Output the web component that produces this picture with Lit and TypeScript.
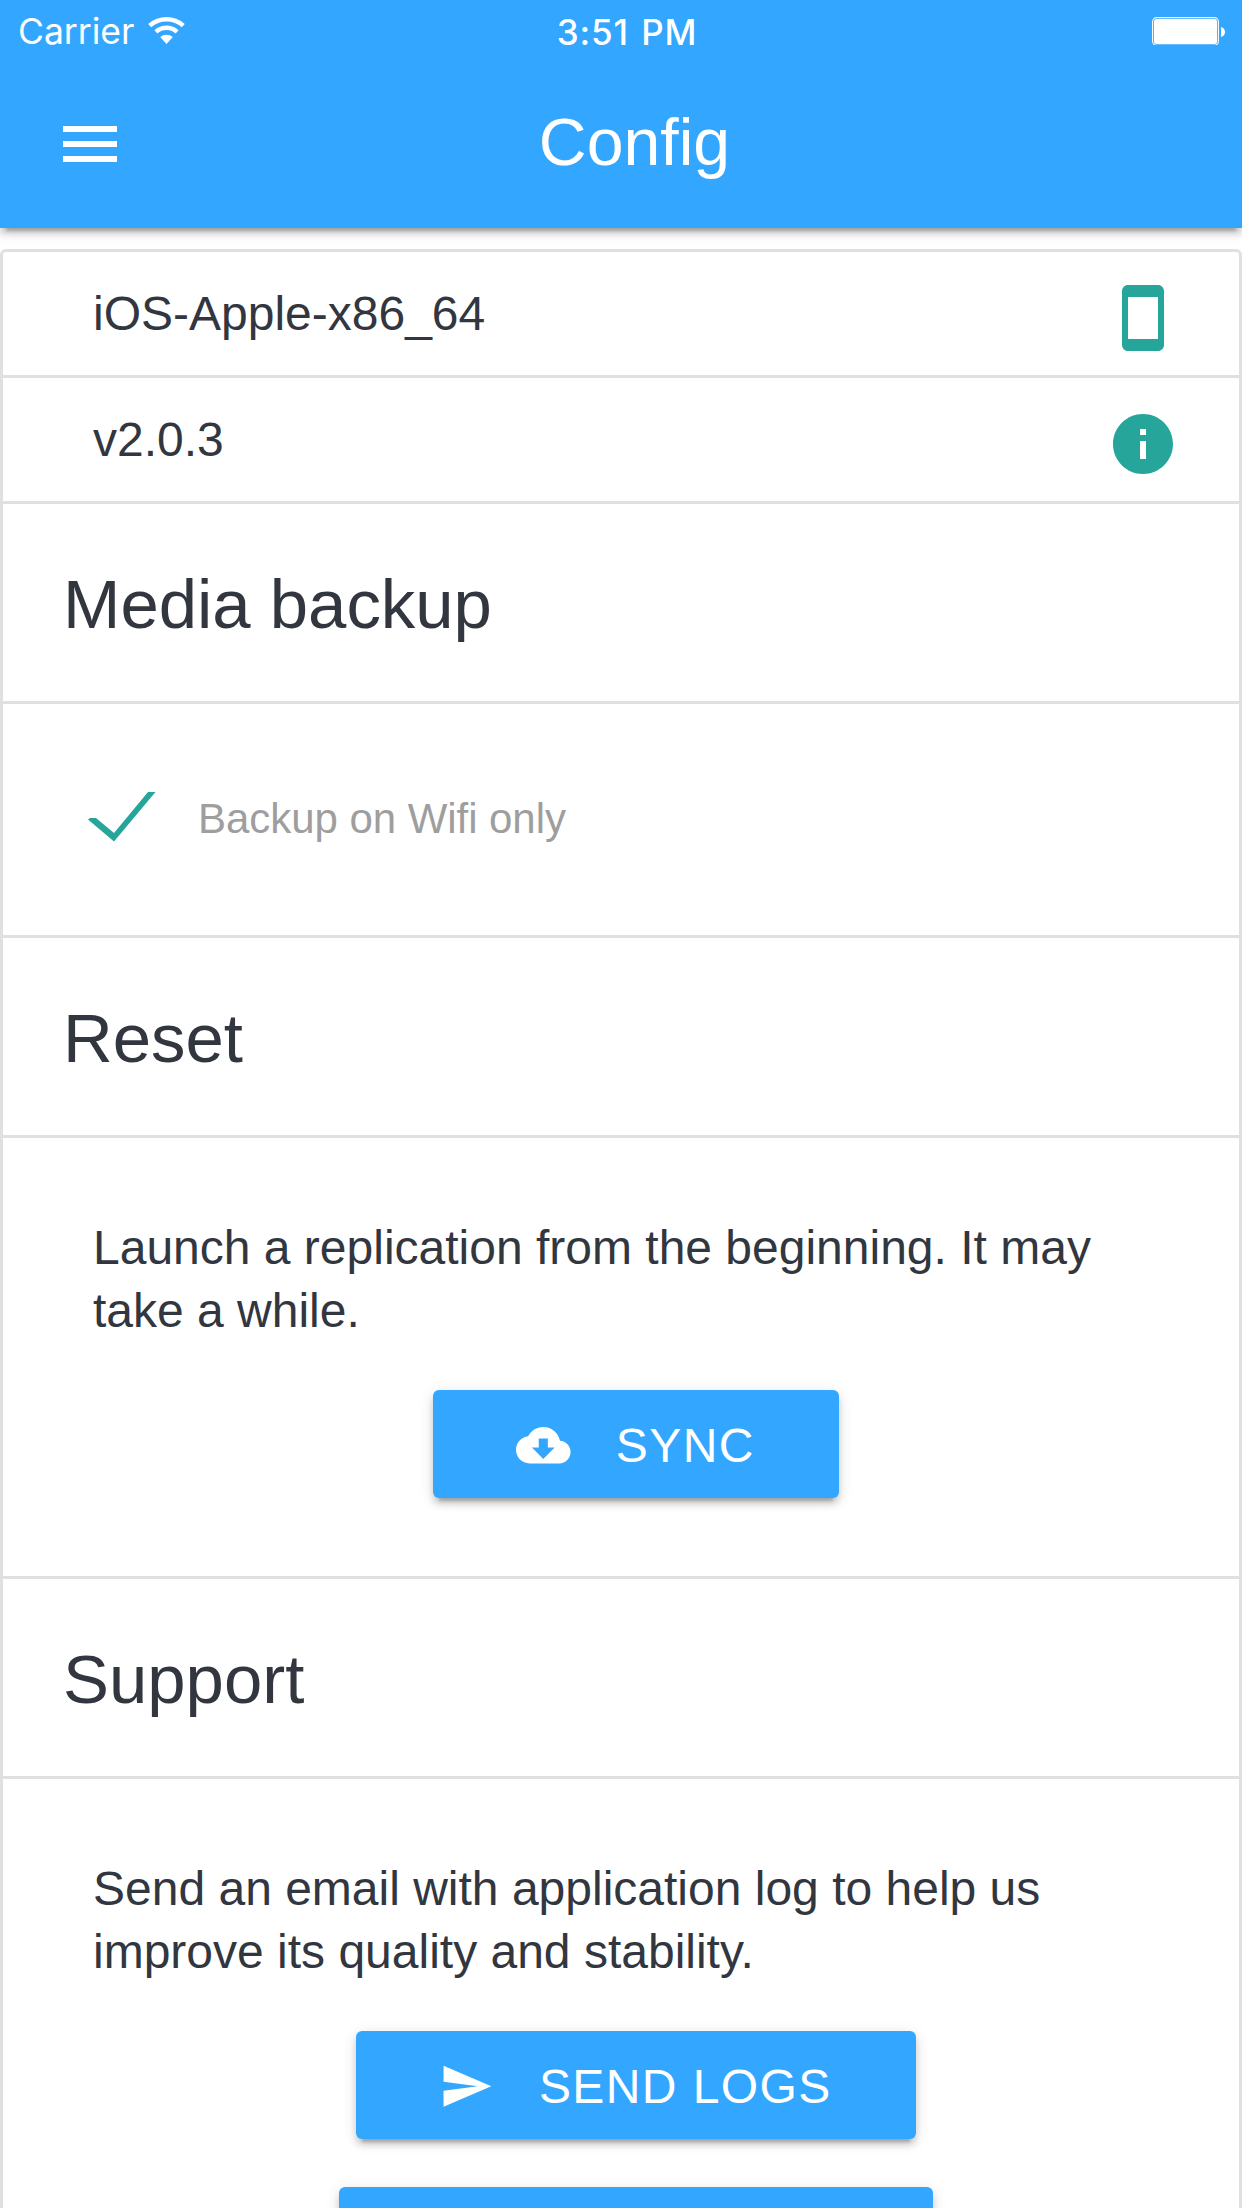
import { LitElement, html, css, svg } from "lit";
import { customElement, property } from "lit/decorators.js";

const ICONS = {
  menu: "M3 18h18v-2H3v2zm0-5h18v-2H3v2zm0-7v2h18V6H3z",
  phone:
    "M17 1.01L7 1c-1.1 0-2 .9-2 2v18c0 1.1.9 2 2 2h10c1.1 0 2-.9 2-2V3c0-1.1-.9-1.99-2-1.99zM17 19H7V5h10v14z",
  info: "M12 2C6.48 2 2 6.48 2 12s4.48 10 10 10 10-4.48 10-10S17.52 2 12 2zm1 15h-2v-6h2v6zm0-8h-2V7h2v2z",
  cloud:
    "M19.35 10.04C18.67 6.59 15.64 4 12 4 9.11 4 6.6 5.64 5.35 8.04 2.34 8.36 0 10.91 0 14c0 3.31 2.69 6 6 6h13c2.76 0 5-2.24 5-5 0-2.64-2.05-4.78-4.65-4.96zM17 13l-5 5-5-5h3V9h4v4h3z",
  send: "M2.01 21L23 12 2.01 3 2 10l15 2-15 2z",
};

@customElement("md-icon")
class MdIcon extends LitElement {
  @property() name: keyof typeof ICONS = "menu";
  static styles = css`
    :host {
      display: block;
      flex: none;
    }
    .glyph {
      display: block;
      width: 100%;
      height: 100%;
      fill: currentColor;
    }
  `;
  render() {
    return html`<svg class="glyph" viewBox="0 0 24 24">${svg`<path d=${ICONS[this.name]}></path>`}</svg>`;
  }
}

@customElement("app-root")
class AppRoot extends LitElement {
  static styles = css`
    :host {
      display: block;
      height: 2208px;
      overflow: hidden;
      background: #fff;
      color: #32363f;
      font-family: "Liberation Sans", Arial, sans-serif;
      font-size: 48px;
      line-height: 63px;
    }
    * {
      box-sizing: border-box;
    }
    .top {
      position: relative;
      height: 228px;
      background: #33a6ff;
      color: #fff;
      box-shadow:
        0 6px 6px 0 rgba(0, 0, 0, 0.14),
        0 3px 15px 0 rgba(0, 0, 0, 0.12),
        0 9px 3px -6px rgba(0, 0, 0, 0.2);
    }
    .status {
      display: grid;
      grid-template-columns: 1fr auto 1fr;
      align-items: center;
      height: 60px;
      padding: 0 16px 0 18px;
      font-family: Inter, sans-serif;
      font-size: 35.5px;
      line-height: 60px;
    }
    .network {
      display: flex;
      align-items: center;
      gap: 14px;
    }
    .carrier {
      padding-top: 2px;
    }
    .wifi {
      width: 37px;
      height: 28px;
    }
    .time {
      padding: 2px 0 0 10px;
      font-weight: 550;
      font-size: 35px;
      letter-spacing: 0.9px;
      word-spacing: 2px;
    }
    .battery {
      justify-self: end;
      width: 74px;
      height: 28px;
    }
    .bar {
      display: grid;
      grid-template-columns: 72px 1fr 72px;
      align-items: center;
      height: 168px;
      padding: 0 27px 0 54px;
    }
    .menu {
      width: 72px;
      height: 72px;
    }
    .title {
      margin: 0;
      padding-bottom: 4px;
      text-align: center;
      font-weight: 400;
      font-size: 66.2px;
      line-height: 164px;
    }
    .list {
      margin-top: 21px;
      height: 2100px;
      border: 3px solid #e0e0e0;
      border-radius: 6px;
    }
    .row,
    .heading,
    .option,
    .block {
      border-bottom: 3px solid #e0e0e0;
    }
    .row {
      display: flex;
      justify-content: space-between;
      height: 126px;
      padding: 30px 60px 0 90px;
    }
    .row-icon {
      width: 72px;
      height: 72px;
      color: #26a69a;
    }
    .heading {
      margin: 0;
      height: 200px;
      padding: 2px 0 0 60px;
      font-weight: 400;
      font-size: 68.9px;
      line-height: 198px;
    }
    .option {
      display: flex;
      align-items: center;
      gap: 42px;
      height: 234px;
      padding-left: 85px;
      color: #9e9e9e;
      font-size: 42px;
    }
    .option-label {
      padding-bottom: 2px;
      letter-spacing: -0.05px;
    }
    .check {
      width: 68px;
      height: 55px;
    }
    .block {
      display: flex;
      flex-direction: column;
      align-items: center;
      gap: 48px;
      padding: 78px 60px 78px 90px;
    }
    .copy {
      margin: 0;
      align-self: stretch;
    }
    .btn {
      display: flex;
      align-items: center;
      height: 108px;
      padding: 2px 84px 0 83px;
      border: 0;
      border-radius: 6px;
      background: #33a6ff;
      color: #fff;
      font: inherit;
      line-height: 108px;
      letter-spacing: 1.4px;
      text-transform: uppercase;
      box-shadow:
        0 6px 6px 0 rgba(0, 0, 0, 0.14),
        0 3px 15px 0 rgba(0, 0, 0, 0.12),
        0 9px 3px -6px rgba(0, 0, 0, 0.2);
    }
    .btn-icon {
      width: 54.6px;
      height: 54.6px;
      margin-right: 45px;
    }
    .btn-label {
      padding-top: 2px;
    }
    .wide {
      width: 594px;
    }
  `;

  render() {
    return html`
      <header class="top">
        <div class="status">
          <div class="network">
            <span class="carrier">Carrier</span>
            <svg class="wifi" viewBox="0 0 37 28" fill="none" stroke="#fff">
              <path d="M1.700 8.600A25.500 25.500 0 0 1 35.300 8.600" stroke-width="4.4" />
              <path d="M7.900 14.800A16 16 0 0 1 29.100 14.800" stroke-width="4.4" />
              <path d="M12.200 19.900A10 10 0 0 1 24.800 19.900L18.500 27z" fill="#fff" stroke="none" />
            </svg>
          </div>
          <span class="time">3:51 PM</span>
          <svg class="battery" viewBox="0 0 74 28">
            <rect x="0.6" y="0.6" width="65.8" height="27.600" rx="4" fill="none" stroke="#fff" stroke-width="1.1" />
            <rect x="2" y="2" width="63" height="24.900" rx="2.500" fill="#fff" />
            <path d="M69 10c2.500 .6 4 2.400 4 5s-1.500 4.400-4 5z" fill="#fff" />
          </svg>
        </div>
        <div class="bar">
          <md-icon class="menu" name="menu"></md-icon>
          <h1 class="title">Config</h1>
        </div>
      </header>
      <main class="list">
        <div class="row">
          <span>iOS-Apple-x86_64</span>
          <md-icon class="row-icon" name="phone"></md-icon>
        </div>
        <div class="row">
          <span>v2.0.3</span>
          <md-icon class="row-icon" name="info"></md-icon>
        </div>
        <h2 class="heading">Media backup</h2>
        <div class="option">
          <svg class="check" viewBox="0 0 68 55" fill="#26a69a">
            <path d="M0 27.500L2 26H8L26 41L60 0H67.500L26 49.500z" />
          </svg>
          <span class="option-label">Backup on Wifi only</span>
        </div>
        <h2 class="heading">Reset</h2>
        <section class="block">
          <p class="copy">Launch a replication from the beginning. It may take a while.</p>
          <button class="btn">
            <md-icon class="btn-icon" name="cloud"></md-icon><span class="btn-label">Sync</span>
          </button>
        </section>
        <h2 class="heading">Support</h2>
        <section class="block">
          <p class="copy">
            Send an email with application log to help us improve its quality and stability.
          </p>
          <button class="btn">
            <md-icon class="btn-icon" name="send"></md-icon><span class="btn-label">Send logs</span>
          </button>
          <button class="btn wide"></button>
        </section>
      </main>
    `;
  }
}
